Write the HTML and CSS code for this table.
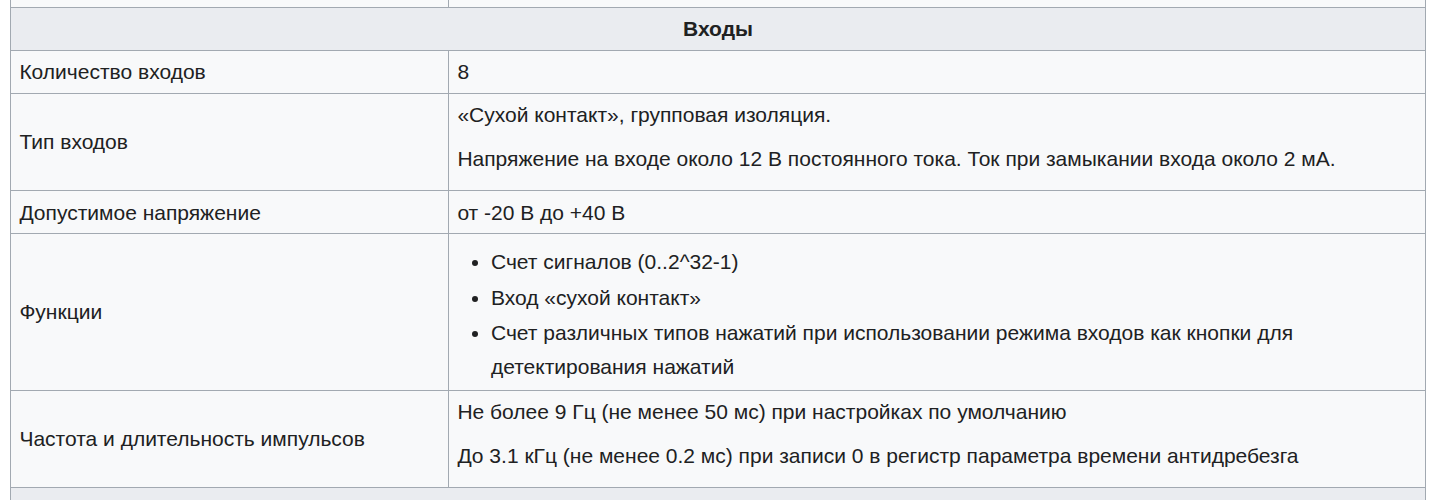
FILE: index.html
```html
<!DOCTYPE html>
<html lang="ru">
<head>
<meta charset="utf-8">
<title>Входы</title>
<link rel="stylesheet" href="styles.css">
</head>
<body>
<table class="wikitable">
  <colgroup><col class="col-name"><col class="col-value"></colgroup>
  <tbody>
    <tr class="prev-row"><td>&nbsp;</td><td>&nbsp;</td></tr>
    <tr><th colspan="2">Входы</th></tr>
    <tr><td>Количество входов</td><td>8</td></tr>
    <tr>
      <td>Тип входов</td>
      <td>«Сухой контакт», групповая изоляция.
        <p>Напряжение на входе около 12 В постоянного тока. Ток при замыкании входа около 2 мА.</p>
      </td>
    </tr>
    <tr><td>Допустимое напряжение</td><td>от -20 В до +40 В</td></tr>
    <tr>
      <td>Функции</td>
      <td>
        <ul>
          <li>Счет сигналов (0..2^32-1)</li>
          <li>Вход «сухой контакт»</li>
          <li>Счет различных типов нажатий при использовании режима входов как кнопки для детектирования нажатий</li>
        </ul>
      </td>
    </tr>
    <tr>
      <td>Частота и длительность импульсов</td>
      <td>Не более 9 Гц (не менее 50 мс) при настройках по умолчанию
        <p>До 3.1 кГц (не менее 0.2 мс) при записи 0 в регистр параметра времени антидребезга</p>
      </td>
    </tr>
    <tr><th colspan="2">&nbsp;</th></tr>
  </tbody>
</table>
</body>
</html>
```
FILE: styles.css
```css
html, body {
  margin: 0;
  padding: 0;
  background: #ffffff;
}

body {
  font-family: "Liberation Sans", Arial, sans-serif;
  font-size: 21px;
  line-height: 1.6;
  color: #202122;
}

.wikitable {
  margin: -36px 0 0 10px;
  width: 1416px;
  table-layout: fixed;
  border-collapse: collapse;
  background: #f8f9fa;
  color: #202122;
  border: 1px solid #a2a9b1;
}

.col-name {
  width: 438px;
}

.wikitable td,
.wikitable th {
  border: 1px solid #a2a9b1;
  padding: 0.2em 0.4em;
  vertical-align: middle;
  text-align: left;
}

.wikitable th {
  background: #eaecf0;
  text-align: center;
  font-weight: bold;
}

.wikitable p {
  margin: 0.5em 0;
}

.wikitable ul {
  margin: 0.3em 0 0 1.6em;
  padding: 0;
  list-style-type: disc;
}

.wikitable li {
  margin-bottom: 0.1em;
}
```
